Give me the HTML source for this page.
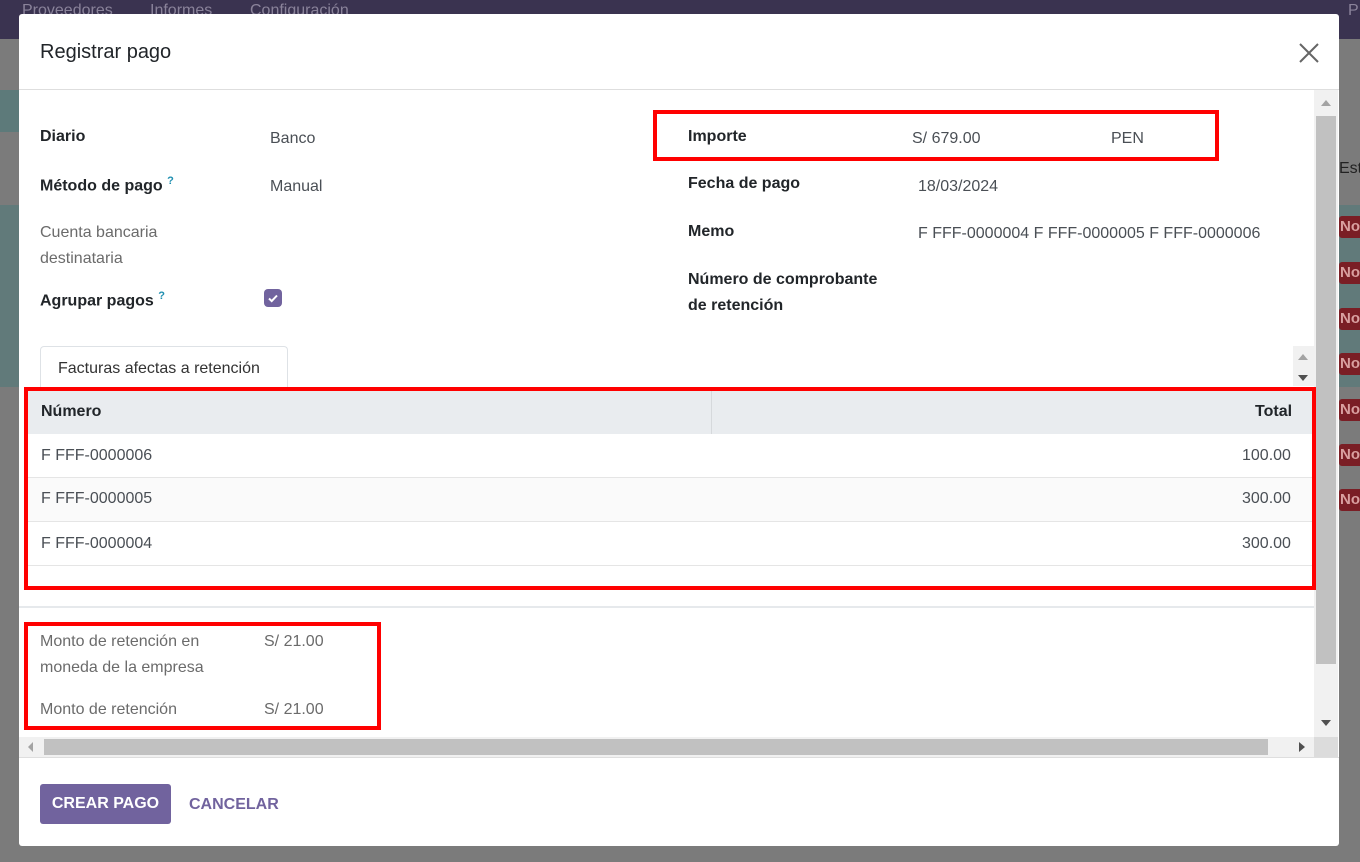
<!DOCTYPE html>
<html><head><meta charset="utf-8"><style>
*{box-sizing:border-box;margin:0;padding:0}
body{width:1360px;height:862px;overflow:hidden;background:#7b7b7b;font-family:"Liberation Sans",sans-serif;font-size:16px;position:relative;color:#212529}
.a{position:absolute;white-space:nowrap}
.nav{left:0;top:0;width:1360px;height:39px;background:#3a3350}
.nav span{color:#8a839a;font-size:16px;position:absolute;top:2px}
.modal{left:19px;top:14px;width:1320px;height:832px;background:#fff;border-radius:3px}
.lb{font-weight:bold;color:#212529}
.gl{color:#6b6b6b}
.v{color:#4a4f55}
.red{border:4px solid #f00}
.row{position:absolute;left:8px;width:1286px;height:44px;border-bottom:1px solid #e5e5e5}
.badge{position:absolute;left:1339px;width:30px;height:22px;background:#7a1e25;color:#d9a0a0;font-weight:bold;font-size:15px;padding:2px 0 0 1px;border-radius:3px 0 0 3px}
</style></head><body>
<div class="a nav"><span style="left:22px">Proveedores</span><span style="left:150px">Informes</span><span style="left:250px">Configuración</span><span style="left:1348px">P</span></div>
<div class="a" style="left:0;top:90px;width:19px;height:42px;background:#5d7a7a"></div>
<div class="a" style="left:0;top:205px;width:19px;height:182px;background:#617a7a"></div>
<div class="a" style="left:1339px;top:205px;width:21px;height:182px;background:#617a7a"></div>
<div class="a" style="left:1339px;top:160px;color:#222;font-size:16px">Esta</div>
<div class="badge" style="top:216px">No</div><div class="badge" style="top:262px">No</div><div class="badge" style="top:308px">No</div><div class="badge" style="top:353px">No</div><div class="badge" style="top:399px">No</div><div class="badge" style="top:444px">No</div><div class="badge" style="top:489px">No</div>
<div class="a modal">
 <div class="a" style="left:21px;top:27px;font-size:20px;color:#212529">Registrar pago</div>
 <svg class="a" style="left:1280px;top:29px" width="20" height="20" viewBox="0 0 20 20"><path d="M1 1L19 19M19 1L1 19" stroke="#666" stroke-width="2"/></svg>
 <div class="a" style="left:0;top:75px;width:1320px;height:1px;background:#dedede"></div>
 <div class="a" style="left:1295px;top:76px;width:24px;height:647px;background:#f1f1f1"></div>
 <div class="a" style="left:1297px;top:102px;width:20px;height:548px;background:#c1c1c1"></div>
 <div class="a" style="left:1302px;top:86px;width:0;height:0;border-left:5px solid transparent;border-right:5px solid transparent;border-bottom:6px solid #a3a3a3"></div>
 <div class="a" style="left:1302px;top:706px;width:0;height:0;border-left:5px solid transparent;border-right:5px solid transparent;border-top:6px solid #505050"></div>
 <div class="a" style="left:0;top:723px;width:1295px;height:20px;background:#f1f1f1"></div>
 <div class="a" style="left:25px;top:725px;width:1224px;height:16px;background:#c1c1c1"></div>
 <div class="a" style="left:9px;top:728px;border-top:5px solid transparent;border-bottom:5px solid transparent;border-right:5px solid #a3a3a3"></div>
 <div class="a" style="left:1280px;top:728px;border-top:5px solid transparent;border-bottom:5px solid transparent;border-left:6px solid #505050"></div>
 <div class="a" style="left:1295px;top:723px;width:24px;height:20px;background:#dcdcdc"></div>
 <div class="a" style="left:0;top:743px;width:1320px;height:1px;background:#dedede"></div>

 <div class="a lb" style="left:21px;top:114px">Diario</div><div class="a v" style="left:251px;top:116px">Banco</div>
 <div class="a lb" style="left:21px;top:161px">Método de pago <sup style="color:#1f8fb0;font-size:11px">?</sup></div><div class="a v" style="left:251px;top:164px">Manual</div>
 <div class="a gl" style="left:21px;top:206px;line-height:26px">Cuenta bancaria<br>destinataria</div>
 <div class="a lb" style="left:21px;top:276px">Agrupar pagos <sup style="color:#1f8fb0;font-size:11px">?</sup></div>
 <div class="a" style="left:245px;top:275px;width:18px;height:18px;background:#71639e;border-radius:4px"><svg width="18" height="18"><path d="M5 9.5l2.7 2.6L13 6.5" stroke="#fff" stroke-width="2" fill="none"/></svg></div>

 <div class="a red" style="left:634px;top:96px;width:566px;height:51px"></div>
 <div class="a lb" style="left:669px;top:114px">Importe</div><div class="a v" style="left:893px;top:116px">S/ 679.00</div><div class="a v" style="left:1092px;top:116px">PEN</div>
 <div class="a lb" style="left:669px;top:161px">Fecha de pago</div><div class="a v" style="left:899px;top:164px">18/03/2024</div>
 <div class="a lb" style="left:669px;top:209px">Memo</div><div class="a v" style="left:899px;top:211px">F FFF-0000004 F FFF-0000005 F FFF-0000006</div>
 <div class="a lb" style="left:669px;top:253px;line-height:26px">Número de comprobante<br>de retención</div>

 <div class="a" style="left:21px;top:332px;width:248px;height:42px;border:1px solid #dee2e6;border-bottom:none;border-radius:4px 4px 0 0;background:#fff"></div>
 <div class="a v" style="left:39px;top:346px;color:#333">Facturas afectas a retención</div>
 <div class="a" style="left:1274px;top:332px;width:21px;height:40px;background:#f1f1f1"></div>
 <div class="a" style="left:1279px;top:340px;border-left:5px solid transparent;border-right:5px solid transparent;border-bottom:6px solid #a3a3a3"></div>
 <div class="a" style="left:1279px;top:361px;border-left:5px solid transparent;border-right:5px solid transparent;border-top:6px solid #505050"></div>

 <div class="a" style="left:8px;top:376px;width:1286px;height:44px;background:#e9ecef"></div>
 <div class="a" style="left:692px;top:376px;width:1px;height:44px;background:#d6d9dc"></div>
 <div class="a lb" style="left:22px;top:389px">Número</div><div class="a lb" style="left:1236px;top:389px">Total</div>
 <div class="row" style="top:420px"></div><div class="a v" style="left:22px;top:433px">F FFF-0000006</div><div class="a v" style="left:1223px;top:433px">100.00</div>
 <div class="row" style="top:464px;background:#fafafa"></div><div class="a v" style="left:22px;top:476px">F FFF-0000005</div><div class="a v" style="left:1223px;top:476px">300.00</div>
 <div class="row" style="top:508px"></div><div class="a v" style="left:22px;top:521px">F FFF-0000004</div><div class="a v" style="left:1223px;top:521px">300.00</div>
 <div class="a red" style="left:5px;top:373px;width:1292px;height:203px"></div>
 <div class="a" style="left:0;top:592px;width:1295px;height:2px;background:#e6e9ec"></div>

 <div class="a red" style="left:5px;top:608px;width:357px;height:108px"></div>
 <div class="a gl" style="left:21px;top:615px;line-height:26px">Monto de retención en<br>moneda de la empresa</div>
 <div class="a gl" style="left:245px;top:619px">S/ 21.00</div>
 <div class="a gl" style="left:21px;top:687px">Monto de retención</div><div class="a gl" style="left:245px;top:687px">S/ 21.00</div>

 <div class="a" style="left:21px;top:770px;width:131px;height:40px;background:#71639e;border-radius:3px;color:#fff;font-weight:bold;font-size:16px;text-align:center;line-height:40px">CREAR PAGO</div>
 <div class="a" style="left:170px;top:782px;color:#71639e;font-weight:bold;font-size:16px">CANCELAR</div>
</div>
</body></html>
